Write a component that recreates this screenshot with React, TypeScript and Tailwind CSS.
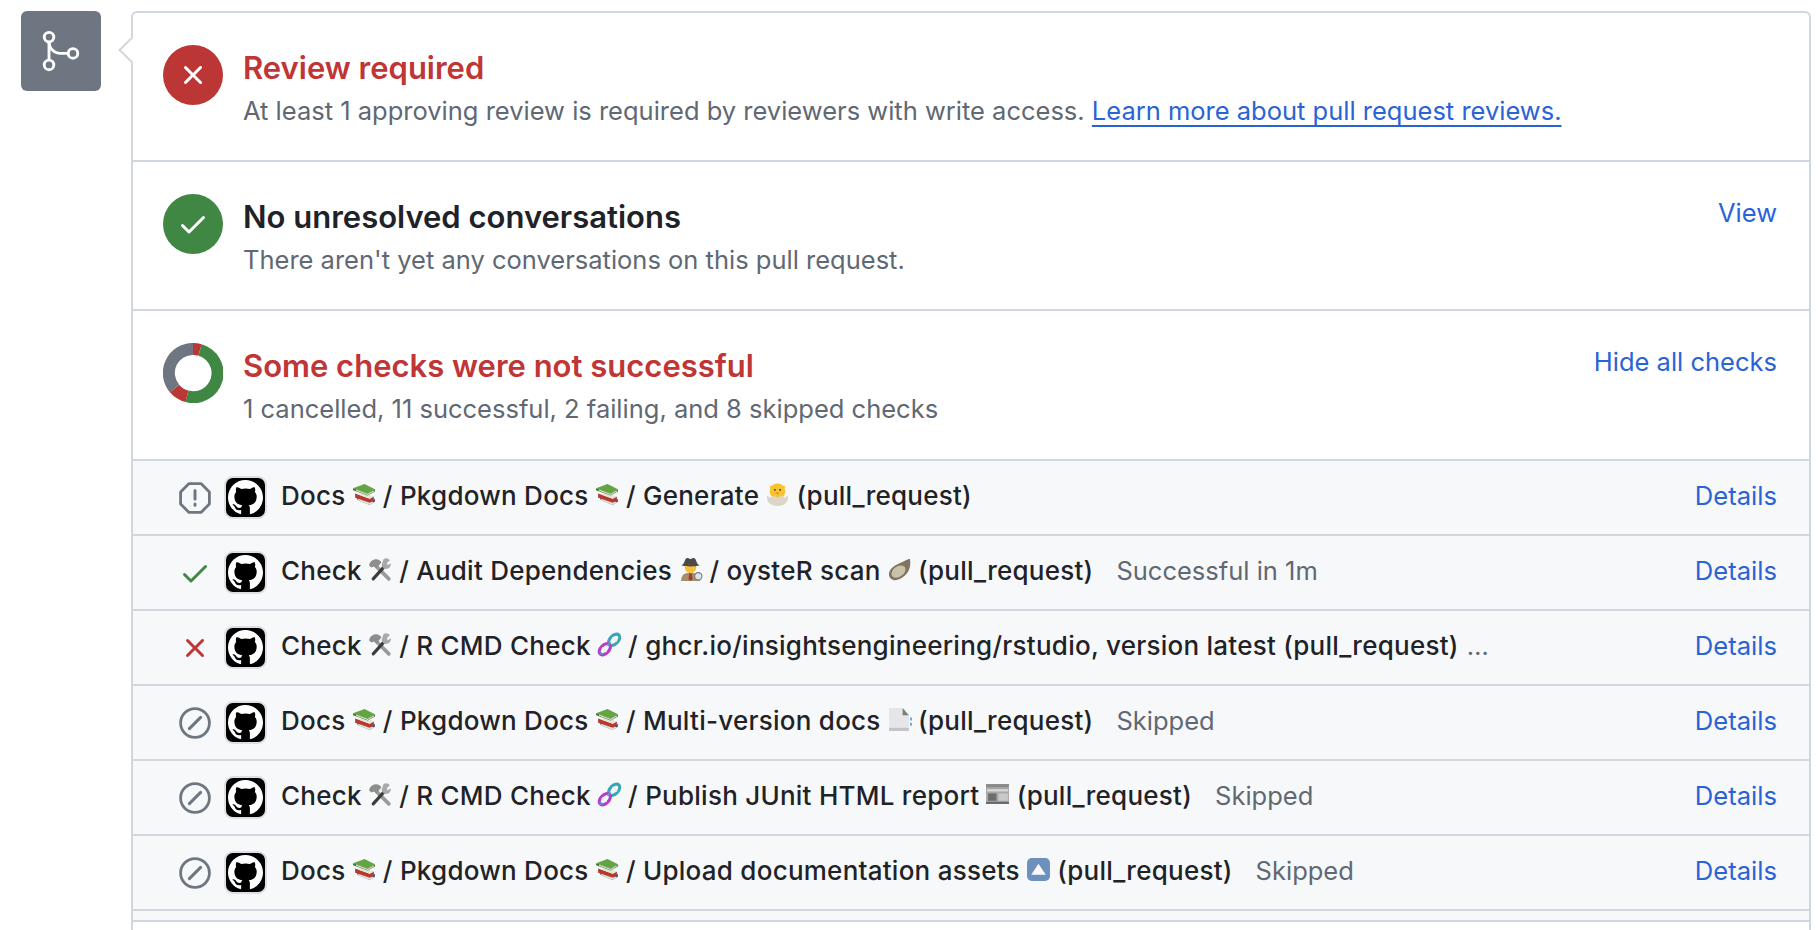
import type { ReactNode } from 'react'
import { GoGitMerge } from 'react-icons/go'

function Emoji({ children }: { children: ReactNode }) {
  return (
    <svg viewBox="0 0 24 24" className="-mr-[2px] inline-block h-[25px] w-[25px] -translate-x-[1px] -translate-y-[3px] align-middle">
      {children}
    </svg>
  )
}

const Books = () => (
  <Emoji>
    <path d="M5 17l12 5 5-3v-3l-5 3-12-5z" fill="#3e56a0" />
    <path d="M5 17l12 5 4-2.500-12-4.500z" fill="#e6e3da" />
    <path d="M3 11l14 5 4-2v4l-4 2-14-5z" fill="#b63a2e" />
    <path d="M6 12l11 4 4-2-10-4z" fill="#e8e4da" />
    <path d="M1 6l11-4 10 5-7 4z" fill="#64a543" />
    <path d="M1 6l14 5 7-4v2l-7 4-14-5z" fill="#3d7a2a" />
    <path d="M4 8l11 4 6-3.500" stroke="#eeeadf" fill="none" />
  </Emoji>
)

const Tools = () => (
  <Emoji>
    <path d="M8 9l12 12" stroke="#9a9a9a" strokeWidth="3.500" strokeLinecap="round" />
    <path d="M15 10L5 21" stroke="#3c3c3c" strokeWidth="3" strokeLinecap="round" />
    <path d="M1 8c1-5 6-7 10-5l2 2-5 6-2-2-3 1z" fill="#8d8d8d" />
    <path d="M15 2a5 5 0 016 1l-3 3 1 2 3-2a5 5 0 01-7 5l-2-3z" fill="#a9a9a9" />
  </Emoji>
)

const Dna = () => (
  <Emoji>
    <ellipse cx="16.500" cy="7.500" rx="6.500" ry="4" transform="rotate(-45 16.500 7.500)" fill="none" stroke="#3aa5b8" strokeWidth="3" />
    <ellipse cx="7.500" cy="16.500" rx="6.500" ry="4" transform="rotate(-45 7.500 16.500)" fill="none" stroke="#b53fc6" strokeWidth="3" />
    <path d="M5 15l4 4M15 5l4 4" stroke="#eef0f5" strokeWidth="2" />
    <path d="M2.500 19.500l3 2M10 13l3-3" stroke="#4a9fd0" strokeWidth="2" />
  </Emoji>
)

const Chick = () => (
  <Emoji>
    <circle cx="12" cy="9" r="7.500" fill="#f9c22e" />
    <path d="M5 4l2 2M19 4l-2 2" stroke="#f9c22e" strokeWidth="2" />
    <circle cx="9.500" cy="7.500" r="0.900" fill="#333" />
    <circle cx="14.500" cy="7.500" r="0.900" fill="#333" />
    <path d="M10 10h4l-2 2z" fill="#e8841c" />
    <path d="M2 13l3 2 3.500-2 3.500 2 3.500-2 3.500 2 3-2c1 6-3 10-10 10S1 19 2 13z" fill="#ddd6c6" />
  </Emoji>
)

const Detective = () => (
  <Emoji>
    <path d="M3 23c0-6 3-8 9-8s9 2 9 8z" fill="#a58f6b" />
    <path d="M11 15h2l1 6-2 2-2-2z" fill="#a33d2e" />
    <circle cx="12" cy="10" r="5.500" fill="#f5c03a" />
    <path d="M3 8c4-1 3-7 6-7 2 0 2 1 3 1s1-1 3-1c3 0 2 6 6 7-5 1.500-13 1.500-18 0z" fill="#4d4a45" />
    <circle cx="19.500" cy="18.500" r="3.500" fill="#d8e6ef" stroke="#777" />
  </Emoji>
)

const Oyster = () => (
  <Emoji>
    <path d="M2 18c-1-6 5-10 10-12s8-4 10-4c1 5 0 11-4 15s-9 6-12 5-3-2-4-4z" fill="#7f7560" />
    <ellipse cx="11" cy="14" rx="7.500" ry="5" transform="rotate(-35 11 14)" fill="#c9c2a8" />
  </Emoji>
)

const Page = () => (
  <Emoji>
    <path d="M2 1h13l6 7v15H2z" fill="#e6e6e8" />
    <path d="M15 1l6 7h-6z" fill="#7d7d80" />
    <path d="M2 20h19v3H2z" fill="#c4c4c7" />
    <path d="M23 10v3M23 15v3" stroke="#4f90e0" strokeWidth="1.500" />
  </Emoji>
)

const News = () => (
  <Emoji>
    <path d="M1 2h22v19H1z" fill="#a9a9a9" />
    <path d="M1 2h22v3H1z" fill="#8a8a8a" />
    <path d="M2 7h20v2H2z" fill="#dcdcdc" />
    <path d="M3 11h8v7H3z" fill="#6d6d6d" />
    <path d="M13 11h9v7h-9z" fill="#c9c9c9" />
    <path d="M1 19h22v2H1z" fill="#666" />
  </Emoji>
)

const UpArrow = () => (
  <Emoji>
    <rect x="1" y="1" width="22" height="22" rx="4.500" fill="#6d90bd" />
    <path d="M12 6.500l7 10.500H5z" fill="#fafafa" />
  </Emoji>
)

function Octicon({ children, className }: { children: ReactNode; className: string }) {
  return (
    <svg viewBox="0 0 16 16" fill="currentColor" className={className}>
      {children}
    </svg>
  )
}

const XPath = () => (
  <path d="M3.72 3.72a.75.75 0 0 1 1.06 0L8 6.94l3.22-3.22a.749.749 0 0 1 1.275.326.749.749 0 0 1-.215.734L9.06 8l3.22 3.22a.749.749 0 0 1-.326 1.275.749.749 0 0 1-.734-.215L8 9.06l-3.22 3.22a.751.751 0 0 1-1.042-.018.751.751 0 0 1-.018-1.042L6.94 8 3.720 4.780a.75.75 0 0 1 0-1.060Z" />
)

const CheckPath = () => (
  <path d="M13.78 4.22a.75.75 0 0 1 0 1.06l-7.25 7.25a.75.75 0 0 1-1.06 0L2.22 9.28a.751.751 0 0 1 .018-1.042.751.751 0 0 1 1.042-.018L6 10.940l6.720-6.720a.75.75 0 0 1 1.060 0Z" />
)

type Status = 'stop' | 'check' | 'x' | 'skip'

const rows: { status: Status; title: ReactNode; note?: string; ellipsis?: boolean }[] = [
  {
    status: 'stop',
    title: <>Docs <Books /> / Pkgdown Docs <Books /> / Generate <Chick /> (pull_request)</>,
  },
  {
    status: 'check',
    title: <>Check <Tools /> / Audit Dependencies <Detective /> / oysteR scan <Oyster /> (pull_request)</>,
    note: 'Successful in 1m',
  },
  {
    status: 'x',
    title: <>Check <Tools /> / R CMD Check <Dna /> / ghcr.io/insightsengineering/rstudio, version latest (pull_request)</>,
    ellipsis: true,
  },
  {
    status: 'skip',
    title: <>Docs <Books /> / Pkgdown Docs <Books /> / Multi-version docs <Page /> (pull_request)</>,
    note: 'Skipped',
  },
  {
    status: 'skip',
    title: <>Check <Tools /> / R CMD Check <Dna /> / Publish JUnit HTML report <News /> (pull_request)</>,
    note: 'Skipped',
  },
  {
    status: 'skip',
    title: <>Docs <Books /> / Pkgdown Docs <Books /> / Upload documentation assets <UpArrow /> (pull_request)</>,
    note: 'Skipped',
  },
]

function StatusIcon({ status }: { status: Status }) {
  if (status === 'check') {
    return (
      <Octicon className="h-[32px] w-[32px] text-[#408744]">
        <CheckPath />
      </Octicon>
    )
  }
  if (status === 'x') {
    return (
      <Octicon className="h-[32px] w-[32px] text-[#c03535]">
        <XPath />
      </Octicon>
    )
  }
  if (status === 'stop') {
    return (
      <svg viewBox="0 0 16 16" fill="none" stroke="#6e7781" strokeWidth="1.4" className="h-[32px] w-[32px]">
        <path d="M5 .8h6L15.200 5v6L11 15.200H5L.8 11V5Z" strokeLinejoin="round" />
        <path d="M8 4.300v4.200M8 11v.6" strokeWidth="1.500" strokeLinecap="round" />
      </svg>
    )
  }
  return (
    <svg viewBox="0 0 16 16" fill="none" stroke="#6e7781" strokeWidth="1.4" className="h-[32px] w-[32px]">
      <circle cx="8" cy="8" r="7.200" />
      <path d="M5.200 10.800l5.600-5.600" strokeWidth="1.500" strokeLinecap="round" />
    </svg>
  )
}

function GithubMark({ className }: { className: string }) {
  return (
    <Octicon className={className}>
      <path d="M8 0c4.42 0 8 3.58 8 8a8.013 8.013 0 0 1-5.45 7.59c-.4.08-.55-.17-.55-.38 0-.27.01-1.13.01-2.2 0-.75-.25-1.23-.54-1.48 1.78-.2 3.65-.88 3.65-3.95 0-.88-.31-1.59-.82-2.15.08-.2.36-1.02-.08-2.12 0 0-.67-.22-2.2.82-.64-.18-1.32-.27-2-.27-.68 0-1.36.09-2 .27-1.53-1.03-2.2-.82-2.2-.82-.44 1.1-.16 1.92-.08 2.12-.51.56-.82 1.28-.82 2.15 0 3.06 1.86 3.75 3.64 3.95-.23.2-.44.55-.51 1.07-.46.21-1.61.55-2.33-.66-.15-.24-.6-.83-1.23-.82-.67.01-.27.38.01.53.34.19.73.9.82 1.13.16.45.68 1.31 2.69.94 0 .67.01 1.3.01 1.49 0 .21-.15.45-.55.38A7.995 7.995 0 0 1 0 8c0-4.42 3.58-8 8-8Z" />
    </Octicon>
  )
}

function Section({
  icon,
  title,
  titleColor,
  action,
  height,
  children,
}: {
  icon: ReactNode
  title: string
  titleColor: string
  action?: string
  height: string
  children: ReactNode
}) {
  return (
    <div className={`flex border-b-2 border-[#d0d7de] pl-[30px] pr-[32px] pt-[32px] ${height}`}>
      {icon}
      <div className="ml-[20px] flex-1">
        <div className={`mt-[4px] text-[31px] font-semibold leading-[38px] ${titleColor}`}>{title}</div>
        <div className="mt-[6px] text-[25.5px] leading-[36px] text-[#5f6873]">{children}</div>
      </div>
      {action && <a className="mt-[1px] text-[25.5px] leading-[36px] text-[#2a63d6]">{action}</a>}
    </div>
  )
}

function Donut() {
  return (
    <svg viewBox="0 0 60 60" className="h-[60px] w-[60px] shrink-0">
      <path d="M30 6A24 24 0 0 1 37 7" fill="none" stroke="#bd3636" strokeWidth="12" />
      <path d="M37 7A24 24 0 0 1 24 53.300" fill="none" stroke="#408744" strokeWidth="12" />
      <path d="M24 53.300A24 24 0 0 1 11.500 45.500" fill="none" stroke="#bd3636" strokeWidth="12" />
      <path d="M11.500 45.500A24 24 0 0 1 30 6" fill="none" stroke="#6e7781" strokeWidth="12" />
    </svg>
  )
}

export default function App() {
  return (
    <div className="flex h-[930px] gap-[30px] overflow-hidden bg-white pl-[21px] pt-[11px] font-['Inter',sans-serif] text-[#1f2328]">
      <div className="flex h-[80px] w-[80px] shrink-0 items-center justify-center rounded-[6px] bg-[#6e7781]">
        <GoGitMerge className="h-[46px] w-[46px] text-white" />
      </div>

      <div className="relative h-[940px] w-[1680px] rounded-t-[6px] border-2 border-[#d0d7de]">
        <div className="absolute left-[-11px] top-[28px] h-[18px] w-[18px] rotate-45 border-b-2 border-l-2 border-[#d0d7de] bg-white" />

        <Section
          height="h-[149px]"
          icon={
            <div className="flex h-[60px] w-[60px] shrink-0 items-center justify-center rounded-full bg-[#bd3636]">
              <Octicon className="h-[32px] w-[32px] text-white">
                <XPath />
              </Octicon>
            </div>
          }
          title="Review required"
          titleColor="text-[#c03535]"
        >
          At least 1 approving review is required by reviewers with write access.{' '}
          <a className="text-[#2a63d6] underline underline-offset-[5px]">Learn more about pull request reviews.</a>
        </Section>

        <Section
          height="h-[149px]"
          icon={
            <div className="flex h-[60px] w-[60px] shrink-0 items-center justify-center rounded-full bg-[#408744]">
              <Octicon className="h-[32px] w-[32px] text-white">
                <CheckPath />
              </Octicon>
            </div>
          }
          title="No unresolved conversations"
          titleColor="text-[#1f2328]"
          action="View"
        >
          There aren't yet any conversations on this pull request.
        </Section>

        <Section
          height="h-[150px]"
          icon={<Donut />}
          title="Some checks were not successful"
          titleColor="text-[#c03535]"
          action="Hide all checks"
        >
          1 cancelled, 11 successful, 2 failing, and 8 skipped checks
        </Section>

        <div className="bg-[#f6f8fa]">
          {rows.map((row, i) => (
            <div key={i} className="flex h-[75px] items-center border-b-2 border-[#d0d7de] pl-[46px] pr-[32px]">
              <div className="flex w-[32px] shrink-0 justify-center">
                <StatusIcon status={row.status} />
              </div>
              <div className="ml-[13px] flex h-[43px] w-[43px] shrink-0 items-center justify-center rounded-[9px] border-2 border-[#dcdfe3] bg-black">
                <GithubMark className="h-[35px] w-[35px] text-white" />
              </div>
              <div className="ml-[14px] -translate-y-[2px] whitespace-nowrap text-[26px] font-medium leading-[36px] tracking-[0.25px]">
                {row.title}
              </div>
              {row.note && (
                <div className="ml-[23px] -translate-y-[1px] whitespace-nowrap text-[25.5px] text-[#5f6873]">
                  {row.note}
                </div>
              )}
              {row.ellipsis && <div className="ml-[8px] -translate-y-[1px] text-[25.5px] text-[#5f6873]">…</div>}
              <a className="ml-auto -translate-y-[1px] text-[25.6px] text-[#2a63d6]">Details</a>
            </div>
          ))}
          <div className="h-[11px] border-b-2 border-[#d0d7de]" />
        </div>
      </div>
    </div>
  )
}
